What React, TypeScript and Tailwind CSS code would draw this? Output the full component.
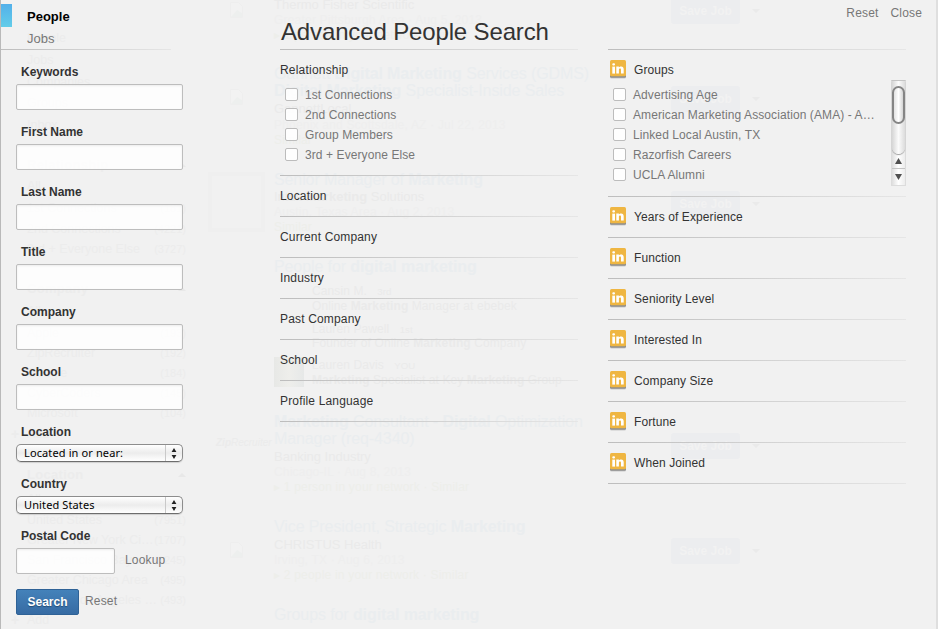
const fields = ["Keywords", "First Name", "Last Name", "Title", "Company", "School"];
const relationships = ["1st Connections", "2nd Connections", "Group Members", "3rd + Everyone Else"];
const groups = [
  "Advertising Age",
  "American Marketing Association (AMA) - A…",
  "Linked Local Austin, TX",
  "Razorfish Careers",
  "UCLA Alumni",
];
const freeFilters = ["Location", "Current Company", "Industry", "Past Company", "School", "Profile Language"];
const premiumFilters = [
  "Years of Experience",
  "Function",
  "Seniority Level",
  "Interested In",
  "Company Size",
  "Fortune",
  "When Joined",
];

function Divider({ className = "" }) {
  return <div className={`h-px bg-gradient-to-r from-[#bdbdbd] to-[#e6e6e6] ${className}`} />;
}

function InBadge() {
  return (
    <svg width="18" height="20" viewBox="0 0 18 20" className="shrink-0">
      <rect x="1" y="3" width="16" height="15.6" rx="1.5" fill="#c9c9c9" />
      <rect x="1" y="2" width="16" height="15.8" rx="1.5" fill="#8f8f8f" />
      <rect x="1" y="0" width="16" height="16.2" rx="1.5" fill="#efb642" />
      <rect x="3.3" y="3.2" width="2.7" height="2.4" rx="1" fill="#fff" />
      <rect x="3.3" y="6.6" width="2.7" height="7" fill="#fff" />
      <path d="M7.3 6.6h2.6v.9c.6-.8 1.3-1.1 2.2-1.1 1.8 0 2.6 1.1 2.6 2.9v4.3h-2.7V10c0-.9-.3-1.4-1-1.4s-1.1.5-1.1 1.4v3.6H7.3z" fill="#fff" />
    </svg>
  );
}

function Check({ label }) {
  return (
    <label className="flex h-5 items-center">
      <span className="mb-px h-[13px] w-[13px] shrink-0 rounded-[2px] border border-[#bcbcbc] bg-white/90" />
      <span className="ml-[7px] whitespace-nowrap tracking-[0.09px] text-[#777]">{label}</span>
    </label>
  );
}

function Select({ value }) {
  return (
    <div className="mt-1 flex h-[18px] w-[167px] items-center rounded-[5px] border border-[#8d8d8d] border-b-[#6d6d6d] bg-gradient-to-b from-white via-[#ececec] to-white shadow-[0_1px_1px_#cfcfcf]">
      <span className="flex-1 pl-[7px] font-['Noto_Sans','Open_Sans',sans-serif] text-[11px] leading-4 tracking-[0.12px] text-black">{value}</span>
      <span className="flex h-full w-[17px] items-center justify-center border-l border-[#c9c9c9]">
        <svg width="6" height="11" viewBox="0 0 6 11">
          <path d="M3 0l2.4 4H.6zM3 11L.6 7h4.8z" fill="#222" />
        </svg>
      </span>
    </div>
  );
}

function ScrollBar() {
  return (
    <div className="flex h-[106px] w-[15px] flex-col border border-[#dcdcdc] border-t-[#c4c4c4] bg-gradient-to-r from-[#dedede] via-white to-[#ececec]">
      <div className="h-[73px] rounded-b-[7px] bg-gradient-to-r from-[#d6d6d6] via-[#fbfbfb] to-[#dcdcdc] pt-[5px] shadow-[0_1px_1px_#999]">
        <div className="h-[38px] w-[13px] rounded-[7px] border-2 border-[#858585] bg-gradient-to-r from-[#e2e2e2] via-white to-[#d4d4d4]" />
      </div>
      <div className="flex h-[15px] items-center justify-center border-b border-[#c4c4c4]">
        <svg width="7" height="6" viewBox="0 0 7 6"><path d="M3.5 0L7 6H0z" fill="#505050" /></svg>
      </div>
      <div className="flex flex-1 items-center justify-center">
        <svg width="7" height="6" viewBox="0 0 7 6"><path d="M3.5 6L0 0h7z" fill="#505050" /></svg>
      </div>
    </div>
  );
}

/* Search results page, almost hidden by the sheet above it */

const facets = [
  { mt: "mt-[30px]", text: "People" },
  { mt: "mt-[6px]", text: "Jobs" },
  { mt: "mt-[6px]", text: "Companies" },
  { mt: "mt-[5px]", text: "Groups" },
  { mt: "mt-[6px]", text: "Inbox" },
  { mt: "mt-[24px]", text: "Relationship", head: true },
  { mt: "mt-[5px]", text: "All" },
  { mt: "mt-[6px]", text: "1st Connections", count: "(181)" },
  { mt: "mt-[5px]", text: "2nd Connections", count: "(4221)" },
  { mt: "mt-[4px]", text: "3rd + Everyone Else", count: "(3727)" },
  { mt: "mt-[24px]", text: "Company", head: true },
  { mt: "mt-[6px]", text: "All" },
  { mt: "mt-[6px]", text: "Apple", count: "(193)" },
  { mt: "mt-[4px]", text: "ZipRecruiter", count: "(192)" },
  { mt: "mt-[4px]", text: "Google", count: "(184)" },
  { mt: "mt-[4px]", text: "CyberCoders", count: "(145)" },
  { mt: "mt-[4px]", text: "Microsoft", count: "(104)" },
  { mt: "mt-[5px]", text: "Add", add: true },
  { mt: "mt-[25px]", text: "Location", head: true },
  { mt: "mt-[8px]", text: "All" },
  { mt: "mt-[5px]", text: "United States", count: "(7951)" },
  { mt: "mt-[4px]", text: "Greater New York Ci…", count: "(1707)" },
  { mt: "mt-[4px]", text: "San Francisco Bay…", count: "(1245)" },
  { mt: "mt-[4px]", text: "Greater Chicago Area", count: "(495)" },
  { mt: "mt-[4px]", text: "Greater Los Angeles …", count: "(493)" },
  { mt: "mt-[4px]", text: "Add", add: true },
];

const title = "text-[16px] tracking-[-0.1px] text-[#eaedef]";
const plain = "text-[13px] text-[#eaeaea]";
const meta = "text-[12px] tracking-[0.2px] text-[#eeeeee]";
const green = "text-[12px] tracking-[0.2px] text-[#edeeea]";
const person = "pl-[38px] text-[12px] tracking-[0.1px] text-[#eaeaea]";

const lines = [
  { mt: "-mt-[3px]", cls: plain, body: "Thermo Fisher Scientific" },
  { mt: "-mt-[1px]", cls: meta, body: "Greater Pittsburgh Area · Aug 5, 2013" },
  { mt: "-mt-[1px]", cls: green, body: "▸ 1 person in your network · Similar" },
  { mt: "mt-[23px]", cls: title, body: <>Gannett <b>Digital Marketing</b> Services (GDMS)</> },
  { mt: "mt-[1px]", cls: title, body: <><b>Digital Marketing</b> Specialist-Inside Sales</> },
  { mt: "mt-[2px]", cls: plain, body: "GannettLocal" },
  { mt: "mt-0", cls: meta, body: "Phoenix and Scottsdale, AZ · Jul 22, 2013" },
  { mt: "-mt-[1px]", cls: green, body: "Similar" },
  { mt: "mt-[24px]", cls: title, body: <>Senior Manager of <b>Marketing</b></> },
  { mt: "mt-[1px]", cls: plain, body: <>Intuit <b>Marketing</b> Solutions</> },
  { mt: "-mt-[1px]", cls: meta, body: "Austin, Texas Area · Aug 2, 2013" },
  { mt: "-mt-[1px]", cls: green, body: "Similar" },
  { mt: "mt-[24px]", cls: title, body: <>People for <b>digital marketing</b></> },
  { mt: "mt-[8px]", cls: person, body: <>Cansin M. &nbsp; <small>3rd</small></> },
  { mt: "-mt-[1px]", cls: person, body: <>Online <b>Marketing</b> Manager at ebebek</> },
  { mt: "mt-[7px]", cls: person, body: <>Lauren Pawell &nbsp; <small>1st</small></> },
  { mt: "-mt-[2px]", cls: person, body: <>Founder of Online <b>Marketing</b> Company</> },
  { mt: "mt-[6px]", cls: person, body: <>Lauren Davis &nbsp; <small>YOU</small></> },
  { mt: "-mt-[1px]", cls: person, body: <><b>Marketing</b> Specialist at Key <b>Marketing</b> Group</> },
  { mt: "mt-[26px]", cls: title, body: <><b>Marketing</b> Consultant - <b>Digital</b> Optimization</> },
  { mt: "mt-[1px]", cls: title, body: "Manager (req-4340)" },
  { mt: "mt-[2px]", cls: plain, body: "Banking Industry" },
  { mt: "-mt-[1px]", cls: meta, body: "Chicago-IL · Aug 8, 2013" },
  { mt: "-mt-[1px]", cls: green, body: "▸ 1 person in your network · Similar" },
  { mt: "mt-[24px]", cls: title, body: <>Vice President, Strategic <b>Marketing</b></> },
  { mt: "mt-[2px]", cls: plain, body: "CHRISTUS Health" },
  { mt: "-mt-[1px]", cls: meta, body: "Irving, TX · Aug 6, 2013" },
  { mt: "-mt-[1px]", cls: green, body: "▸ 2 people in your network · Similar" },
  { mt: "mt-[24px]", cls: title, body: <>Groups for <b>digital marketing</b></> },
];

const saveButtons = ["-mt-[2px]", "mt-[62px]", "mt-[79px]", "mt-[216px]", "mt-[79px]"];

function BrokenImage({ className }) {
  return (
    <svg width="13" height="16" viewBox="0 0 13 16" className={`ml-[22px] ${className}`}>
      <path d="M.5.5h8l4 4v11H.5z" fill="#f2f2f2" stroke="#eeeeee" />
      <path d="M1 15l6-7 5 3v4z" fill="#edefee" />
    </svg>
  );
}

function ResultsPage() {
  return (
    <div className="flex h-full overflow-hidden" aria-hidden="true">
      <div className="flex w-[208px] shrink-0 flex-col pl-[11px]">
        {facets.map((f, i) => (
          <div key={i} className={`flex h-4 w-[175px] shrink-0 items-center whitespace-nowrap text-[#ececec] ${f.mt}`}>
            <span className="w-4 text-[14px] font-bold">{f.add ? "+" : ""}</span>
            <span className={f.head ? "flex-1 text-[13px] font-bold tracking-[0.3px]" : "flex-1 text-[12.5px]"}>{f.text}</span>
            {f.head && <span className="h-0 w-0 border-x-4 border-b-4 border-x-transparent border-b-[#e8e8e8]" />}
            {f.count && <span className="text-[11px]">{f.count}</span>}
          </div>
        ))}
      </div>
      <div className="flex w-[66px] shrink-0 flex-col">
        <BrokenImage className="mt-[2px]" />
        <BrokenImage className="mt-[71px]" />
        <div className="mt-[67px] h-[60px] w-[57px] border-4 border-[#efefef]" />
        <div className="mt-[203px] h-4 pl-2 text-[10px] italic leading-4 text-[#ebebeb]"><b>Zip</b>Recruiter</div>
        <BrokenImage className="mt-[91px]" />
      </div>
      <div className="flex w-[397px] shrink-0 flex-col">
        {lines.map((l, i) => (
          <div key={i} className={`h-4 shrink-0 whitespace-nowrap leading-4 ${l.mt} ${l.cls}`}>{l.body}</div>
        ))}
      </div>
      <div className="flex flex-col">
        {saveButtons.map((mt, i) => (
          <div key={i} className={`flex items-center gap-3 ${mt}`}>
            <span className="flex h-[26px] w-[69px] items-center justify-center rounded-[3px] bg-[#ecedef] text-[12px] font-bold text-[#f2f2f2]">Save Job</span>
            <span className="h-0 w-0 border-x-4 border-t-4 border-x-transparent border-t-[#eaeaea]" />
          </div>
        ))}
      </div>
    </div>
  );
}

export default function App() {
  return (
    <div className="relative h-[629px] w-[938px] overflow-hidden bg-[#f1f1f1] font-['Liberation_Sans',Arial,sans-serif] text-[12px] leading-4">
      <ResultsPage />
      {/* own photo in the people results */}
      <div className="absolute left-[274px] top-[357px] h-[30px] w-[30px] bg-gradient-to-r from-[#e7e8e6] via-[#eeeeeb] to-[#e6e8e8]" />

      <div className="absolute inset-0 flex border-l border-[#b9b9b9]">
        <aside className="w-[279px] shrink-0">
          <div className="flex h-[49px] pt-1">
            <div className="h-[23px] w-[11px] bg-gradient-to-b from-[#53b0ea] to-[#63cde9]" />
            <nav className="flex flex-col pl-[15px] pt-1 text-[13px]">
              <a className="h-[22px] font-bold leading-[18px] text-black">People</a>
              <a className="leading-[18px] text-[#777]">Jobs</a>
            </nav>
          </div>
          <Divider className="w-[170px]" />

          <form className="flex flex-col gap-[14px] pl-[15px] pt-[14px]">
            {fields.map((f) => (
              <div key={f}>
                <div className="pl-[5px] font-bold text-[#333]">{f}</div>
                <input className="mt-1 block h-[26px] w-[167px] rounded-[2px] border border-[#bdbdbd] bg-white/85 shadow-[inset_0_1px_2px_#ececec]" />
              </div>
            ))}
            <div>
              <div className="pl-[5px] font-bold text-[#333]">Location</div>
              <Select value="Located in or near:" />
            </div>
            <div>
              <div className="pl-[5px] font-bold text-[#333]">Country</div>
              <Select value="United States" />
            </div>
            <div>
              <div className="pl-[5px] font-bold text-[#333]">Postal Code</div>
              <div className="mt-1 flex items-center gap-[10px]">
                <input className="block h-[26px] w-[99px] rounded-[2px] border border-[#bdbdbd] bg-white/85 shadow-[inset_0_1px_2px_#ececec]" />
                <a className="pb-[2px] tracking-[0.16px] text-[#777]">Lookup</a>
              </div>
            </div>
            <div className="mt-px flex items-center gap-[6px]">
              <button type="button" className="h-[26px] w-[63px] rounded-[2px] border border-[#2f6296] bg-gradient-to-b from-[#4482ba] to-[#376ba3] text-[12px] font-bold text-white [text-shadow:0_1px_1px_#234b75]">Search</button>
              <a className="pb-[2px] tracking-[0.16px] text-[#777]">Reset</a>
            </div>
          </form>
        </aside>

        <section className="w-[298px] shrink-0">
          <h1 className="h-[49px] whitespace-nowrap pl-px pt-[17px] text-[24px] leading-[30px] tracking-[-0.14px] text-[#333]">Advanced People Search</h1>
          <Divider />
          <div className="h-[125px] pt-3">
            <div className="tracking-[0.2px] text-[#333]">Relationship</div>
            <div className="pl-[5px] pt-[7px]">
              {relationships.map((r) => <Check key={r} label={r} />)}
            </div>
          </div>
          <Divider />
          {freeFilters.map((f) => (
            <div key={f}>
              <div className="h-10 pt-3 tracking-[0.16px] text-[#333]">{f}</div>
              <Divider />
            </div>
          ))}
        </section>

        <section className="ml-[30px] w-[330px] shrink-0 border-r-2 border-[#dfdfdf]">
          <div className="flex h-[49px] justify-end gap-3 pr-[14px] pt-[5px] tracking-[0.16px] text-[#777]">
            <a>Reset</a>
            <a>Close</a>
          </div>
          <Divider className="w-[298px]" />
          <div className="flex h-[146px] w-[298px]">
            <div className="flex-1 pt-[10px]">
              <div className="flex items-center gap-[7px] pl-px tracking-[0.1px] text-[#333]">
                <InBadge />
                Groups
              </div>
              <div className="pl-[5px] pt-[5px]">
                {groups.map((g) => <Check key={g} label={g} />)}
              </div>
            </div>
            <div className="pt-[30px]">
              <ScrollBar />
            </div>
          </div>
          <Divider className="w-[298px]" />
          {premiumFilters.map((f) => (
            <div key={f}>
              <div className="flex h-10 items-start gap-[7px] pl-px pt-[10px] tracking-[0.1px] text-[#333]">
                <InBadge />
                <span className="pt-[2px]">{f}</span>
              </div>
              <Divider className="w-[298px]" />
            </div>
          ))}
        </section>
      </div>
    </div>
  );
}
